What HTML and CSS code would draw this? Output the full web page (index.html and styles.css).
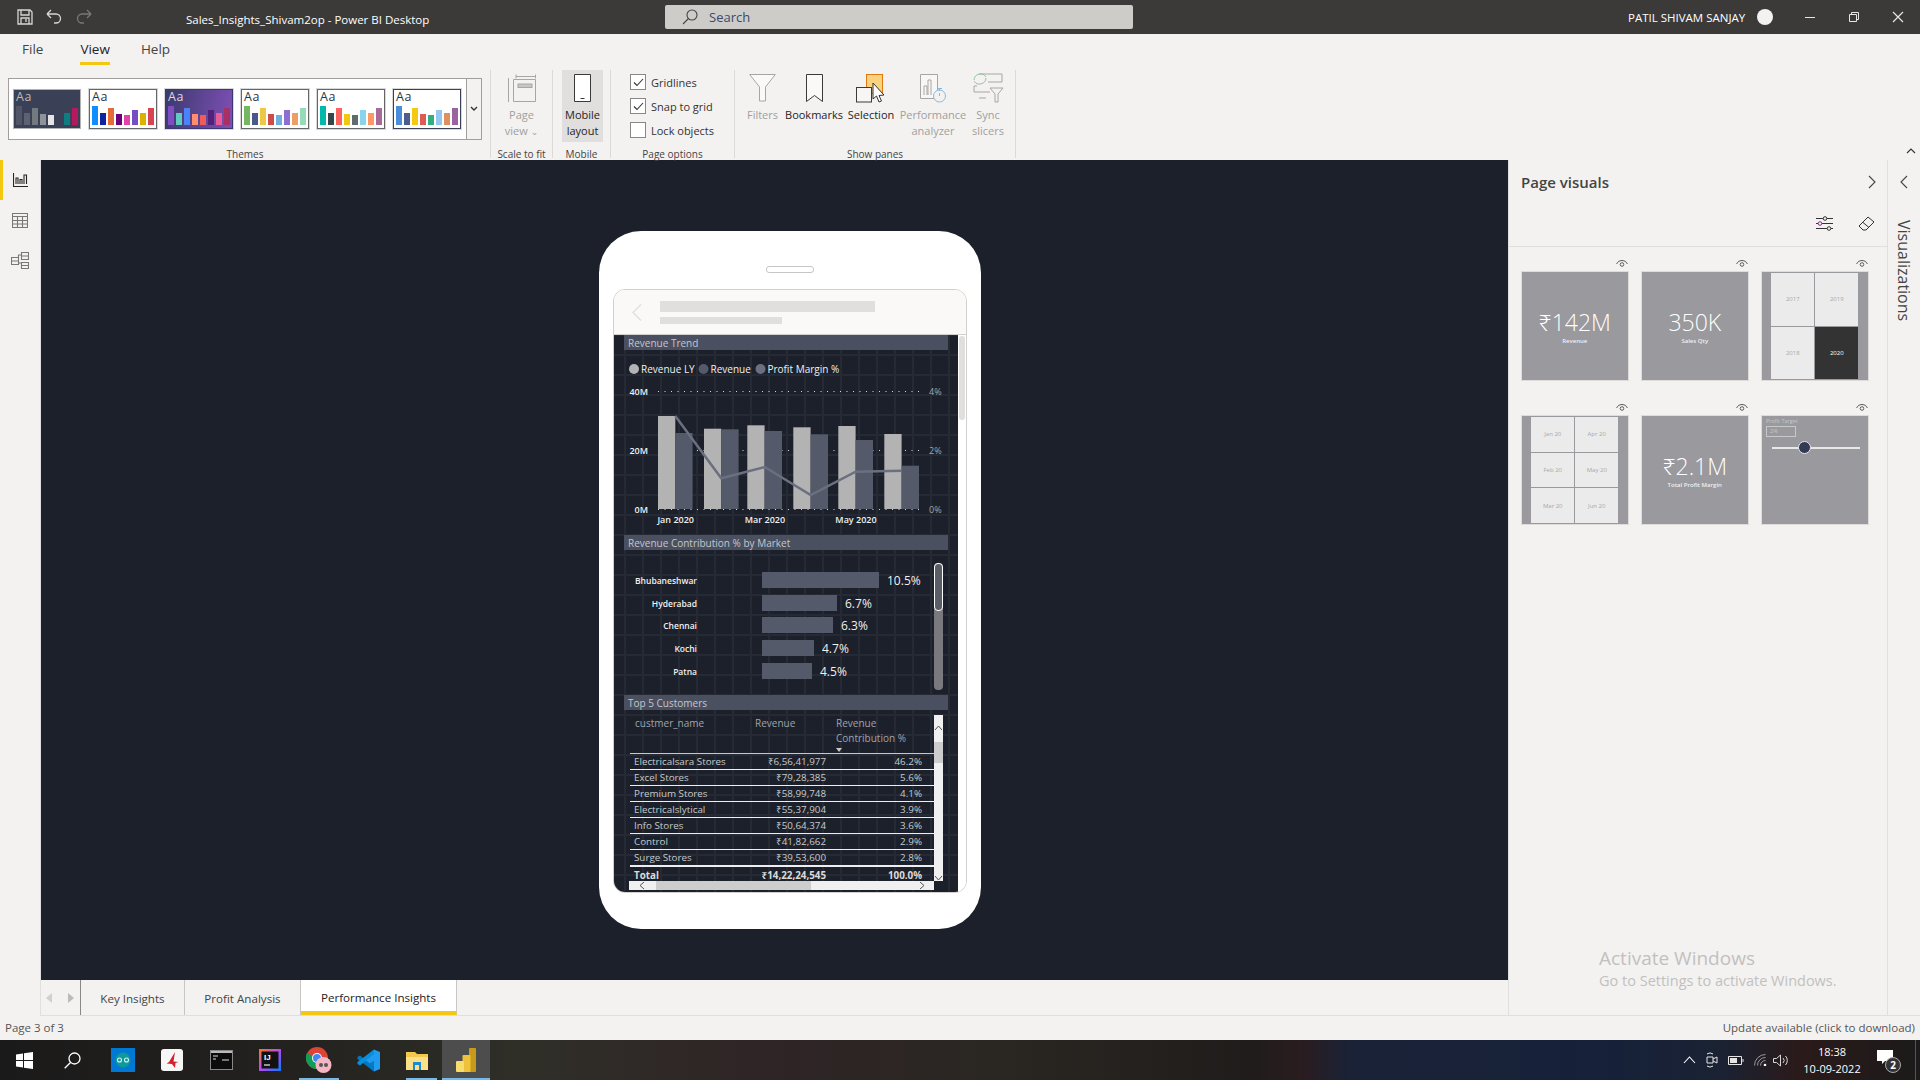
FILE: index.html
```html
<!DOCTYPE html>
<html lang="en">
<head>
    <meta charset="UTF-8">
    <title>Sales_Insights_Shivam2op - Power BI Desktop</title>
    <link rel="stylesheet" href="styles.css">
</head>
<body>
<div class="app">
    <!-- title bar -->
    <div class="titlebar">
        <div class="quick">
            <svg width="18" height="18" viewBox="0 0 18 18" fill="none" stroke="#d8d6d4" stroke-width="1.3"><path d="M2 2h12l2 2v12H2z"/><path d="M5 2v5h8V2M5 16v-6h8v6M10 11v3"/></svg>
            <svg width="16" height="18" viewBox="0 0 16 18" fill="none" stroke="#d8d6d4" stroke-width="1.3"><path d="M1 7h9a4.500 4.500 0 0 1 0 9H8M1 7l4-4M1 7l4 4" transform="translate(0 -1)"/></svg>
            <svg width="16" height="18" viewBox="0 0 16 18" fill="none" stroke="#7a7876" stroke-width="1.3"><path d="M15 7H6a4.500 4.500 0 0 0 0 9h2M15 7l-4-4M15 7l-4 4" transform="translate(0 -1)"/></svg>
        </div>
        <div class="doc-title">Sales_Insights_Shivam2op - Power BI Desktop</div>
        <div class="searchbox">
            <svg width="16" height="16" viewBox="0 0 16 16" fill="none" stroke="#444" stroke-width="1.1"><circle cx="10" cy="6" r="5"/><path d="M6.500 9.500L1 15"/></svg>
            <span>Search</span>
        </div>
        <div class="user">PATIL SHIVAM SANJAY</div>
        <div class="avatar"></div>
        <div class="winbtns">
            <svg width="12" height="12" viewBox="0 0 12 12" stroke="#e6e6e6" fill="none"><path d="M1 6.500h10"/></svg>
            <svg width="12" height="12" viewBox="0 0 12 12" stroke="#e6e6e6" fill="none"><path d="M1.500 3.500h7v7h-7zM3.500 3.500v-2h7v7h-2"/></svg>
            <svg width="12" height="12" viewBox="0 0 12 12" stroke="#e6e6e6" fill="none" stroke-width="1.2"><path d="M1 1l10 10M11 1L1 11"/></svg>
        </div>
    </div>

    <!-- menu tabs -->
    <div class="menutabs">
        <div class="menutab">File</div>
        <div class="menutab active">View</div>
        <div class="menutab">Help</div>
    </div>

    <!-- ribbon -->
    <div class="ribbon">
        <div class="group g-themes">
            <div class="group-body">
                <div class="themes">
                    <div class="theme t1"><div class="aa">Aa</div><div class="bars"><i style="height:19px;background:#505668"></i><i style="height:12px;background:#5d6270"></i><i style="height:17px;background:#74787f"></i><i style="height:11px;background:#8f9297"></i><i style="height:10px;background:#e5e5e5"></i><i style="height:0"></i><i style="height:12px;background:#0e7d81"></i><i style="height:17px;background:#b5195e"></i></div></div>
                    <div class="theme"><div class="aa">Aa</div><div class="bars"><i style="height:19px;background:#118dff"></i><i style="height:12px;background:#12239e"></i><i style="height:17px;background:#e66c37"></i><i style="height:11px;background:#6b007b"></i><i style="height:10px;background:#e044a7"></i><i style="height:15px;background:#744ec2"></i><i style="height:12px;background:#d9b300"></i><i style="height:17px;background:#d64550"></i></div></div>
                    <div class="theme t3"><div class="aa">Aa</div><div class="bars"><i style="height:19px;background:#7f4dc4"></i><i style="height:12px;background:#5ecbbe"></i><i style="height:17px;background:#4a82f7"></i><i style="height:11px;background:#ff8d6f"></i><i style="height:10px;background:#f35b57"></i><i style="height:15px;background:#52227a"></i><i style="height:12px;background:#ea5b97"></i><i style="height:17px;background:#a83065"></i></div></div>
                    <div class="theme"><div class="aa">Aa</div><div class="bars"><i style="height:19px;background:#73b761"></i><i style="height:12px;background:#4a588a"></i><i style="height:17px;background:#ecc846"></i><i style="height:11px;background:#cd4c46"></i><i style="height:10px;background:#71afe2"></i><i style="height:15px;background:#8d6fd1"></i><i style="height:12px;background:#ee9e64"></i><i style="height:17px;background:#95dabb"></i></div></div>
                    <div class="theme"><div class="aa">Aa</div><div class="bars"><i style="height:19px;background:#01b8aa"></i><i style="height:12px;background:#374649"></i><i style="height:17px;background:#fd625e"></i><i style="height:11px;background:#f2c80f"></i><i style="height:10px;background:#5f6b6d"></i><i style="height:15px;background:#8ad4eb"></i><i style="height:12px;background:#fe9666"></i><i style="height:17px;background:#a66999"></i></div></div>
                    <div class="theme t6"><div class="aa">Aa</div><div class="bars"><i style="height:19px;background:#4a8ddc"></i><i style="height:12px;background:#4c5d8a"></i><i style="height:17px;background:#f3c911"></i><i style="height:11px;background:#dc5b57"></i><i style="height:10px;background:#33ae81"></i><i style="height:15px;background:#95c8f0"></i><i style="height:12px;background:#dd915f"></i><i style="height:17px;background:#9a64a0"></i></div></div>
                </div>
                <div class="themes-more"><svg width="8" height="6" viewBox="0 0 8 6" fill="none" stroke="#333" stroke-width="1.4"><path d="M1 1l3 3 3-3"/></svg></div>
            </div>
            <div class="group-label">Themes</div>
        </div>

        <div class="group g-scale">
            <div class="group-body">
                <div class="rbtn dim">
                    <svg width="28" height="28" viewBox="0 0 28 28" fill="none" stroke="#a8a6a4"><path d="M.5 4v24"/><path d="M5.500 5.500h22v22h-22z"/><path d="M8 .5v4M27.500 .5v4M8 2.500h19"/><rect x="10" y="10" width="14" height="3.500" fill="#c8c6c4"/></svg>
                    <span>Page<br>view <small>⌄</small></span>
                </div>
            </div>
            <div class="group-label">Scale to fit</div>
        </div>

        <div class="group g-mobile">
            <div class="group-body">
                <div class="rbtn selected">
                    <svg width="17" height="28" viewBox="0 0 17 28" fill="#fff" stroke="#3b3a39"><path d="M.5.500h16v27H.5z"/><path d="M6.500 24.500h4"/></svg>
                    <span>Mobile<br>layout</span>
                </div>
            </div>
            <div class="group-label">Mobile</div>
        </div>

        <div class="group g-options">
            <div class="group-body checks">
                <label class="check"><span class="box"><svg width="11" height="9" viewBox="0 0 11 9" fill="none" stroke="#333" stroke-width="1.1"><path d="M1 4.500l3 3 6-6.500"/></svg></span>Gridlines</label>
                <label class="check"><span class="box"><svg width="11" height="9" viewBox="0 0 11 9" fill="none" stroke="#333" stroke-width="1.1"><path d="M1 4.500l3 3 6-6.500"/></svg></span>Snap to grid</label>
                <label class="check"><span class="box"></span>Lock objects</label>
            </div>
            <div class="group-label">Page options</div>
        </div>

        <div class="group g-panes">
            <div class="group-body panes">
                <div class="rbtn dim w-filters">
                    <svg width="27" height="28" viewBox="0 0 27 28" fill="#faf9f8" stroke="#a8a6a4"><path d="M.7.500h25.600L16.500 13v14h-6V13z"/></svg>
                    <span>Filters</span>
                </div>
                <div class="rbtn w-book">
                    <svg width="17" height="28" viewBox="0 0 17 28" fill="#faf9f8" stroke="#3b3a39"><path d="M.5.500h16v27l-8-6-8 6z"/></svg>
                    <span>Bookmarks</span>
                </div>
                <div class="rbtn w-sel">
                    <svg width="30" height="30" viewBox="0 0 30 30"><rect x="10.500" y=".5" width="16" height="19" fill="#f8d27f" stroke="#e07a10"/><rect x=".5" y="13.500" width="15" height="14.500" fill="#f7f6f5" stroke="#3b3a39"/><path d="M17 9v16l3.500-3 2.500 6 2.500-1-2.500-5.500 5-.5z" fill="#fff" stroke="#333"/></svg>
                    <span>Selection</span>
                </div>
                <div class="rbtn dim w-perf">
                    <svg width="27" height="30" viewBox="0 0 27 30" fill="none" stroke="#a8a6a4"><path d="M.5.500h17v24H.5z" fill="#f8f7f6"/><path d="M4 21V12h3v9M8 21V6h3v15"/><circle cx="19.500" cy="22" r="6" fill="#f3f2f1" stroke="#8ab8dc"/><path d="M17 14.500h5M19.500 15v2M19.500 22v-3" stroke="#8ab8dc"/></svg>
                    <span>Performance<br>analyzer</span>
                </div>
                <div class="rbtn dim w-sync">
                    <svg width="32" height="32" viewBox="0 0 32 32" fill="none" stroke="#a8a6a4"><path d="M7 2h23v8H16M5 14H2v6h16M7 26h7"/><path d="M18 16h13l-5 6v8h-3v-8z" fill="#f3f2f1"/><path d="M2 8a6.500 6.500 0 0 1 12-3M14 6a6.500 6.500 0 0 1-12 3" stroke="#8fc79a"/></svg>
                    <span>Sync<br>slicers</span>
                </div>
            </div>
            <div class="group-label">Show panes</div>
        </div>
        <div class="ribbon-collapse"><svg width="10" height="6" viewBox="0 0 10 6" fill="none" stroke="#333" stroke-width="1.1"><path d="M1 5l4-4 4 4"/></svg></div>
    </div>

    <div class="work">
        <!-- left rail -->
        <div class="rail">
            <div class="rail-item current"><svg width="15" height="14" viewBox="0 0 15 14" fill="none" stroke="#252423" stroke-width="1.100"><path d="M.5 0v13.500H15"/><path d="M3 11V5h2v6M7 11V6.500h2V11M11 11V2h2.500v9"/></svg></div>
            <div class="rail-item"><svg width="16" height="15" viewBox="0 0 16 15" fill="none" stroke="#7a7876" stroke-width="1.100"><path d="M.5.500h15v14H.5zM.5 3.500h15M.5 7.500h15M.5 11h15M5.500 3.500v11M10.500 3.500v11"/></svg></div>
            <div class="rail-item"><svg width="18" height="17" viewBox="0 0 18 17" fill="none" stroke="#7a7876" stroke-width="1.100"><path d="M.5 5.500h7v7h-7zM.5 9h7M10.500.5h7v7h-7zM10.500 4h7M10.500 10.500h7v6h-7zM10.500 13.500h7M7.500 6V3h3M7.500 11h3"/></svg></div>
        </div>

        <div class="center">
            <!-- report canvas with phone frame -->
            <div class="canvas">
                <div class="phone">
                    <div class="speaker"></div>
                    <div class="screen">
                        <div class="screen-head">
                            <svg width="10" height="17" viewBox="0 0 10 17" fill="none" stroke="#e1dfdd" stroke-width="1.300"><path d="M9 .5L1 8.500l8 8"/></svg>
                            <div class="skel">
                                <div class="skel-a"></div>
                                <div class="skel-b"></div>
                            </div>
                        </div>
                        <div class="screen-body">
                            <div class="mcanvas">
                                <div class="vhead">Revenue Trend</div>
                                <svg class="trend" width="345" height="185" viewBox="613 350 345 185">
                                    <circle cx="634" cy="369" r="5" fill="#b3b3b3"/>
                                    <text x="641" y="373" class="legend">Revenue LY</text>
                                    <circle cx="703.500" cy="369" r="5" fill="#555a6a"/>
                                    <text x="710.500" y="373" class="legend">Revenue</text>
                                    <circle cx="760.500" cy="369" r="5" fill="#6b7080"/>
                                    <text x="767.500" y="373" class="legend">Profit Margin %</text>

                                    <path d="M658 391.500H920M658 450.500H920M658 509.500H920" stroke="#d8d8d8" stroke-dasharray="1 5.500"/>

                                    <g fill="#b3b3b3">
                                        <rect x="658" y="416" width="17.300" height="93"/>
                                        <rect x="704" y="428.700" width="17.300" height="80.300"/>
                                        <rect x="747.300" y="425.300" width="17.300" height="83.700"/>
                                        <rect x="793.300" y="427.300" width="17.300" height="81.700"/>
                                        <rect x="838.300" y="426" width="17.300" height="83"/>
                                        <rect x="884.300" y="434" width="17.300" height="75"/>
                                    </g>
                                    <g fill="#555a6a">
                                        <rect x="675.300" y="433" width="17.300" height="76"/>
                                        <rect x="721.300" y="429.300" width="17.300" height="79.700"/>
                                        <rect x="764.700" y="431" width="17.300" height="78"/>
                                        <rect x="810.700" y="434.300" width="17.300" height="74.700"/>
                                        <rect x="855.700" y="440" width="17.300" height="69"/>
                                        <rect x="901.700" y="465.700" width="17.300" height="43.300"/>
                                    </g>
                                    <polyline points="675.300,416 721.300,478.300 764.700,467 810.700,495 855.700,471.700 901.700,470.700" fill="none" stroke="#6b7080" stroke-width="2.500"/>

                                    <text x="648" y="395" class="axis" text-anchor="end">40M</text>
                                    <text x="648" y="454" class="axis" text-anchor="end">20M</text>
                                    <text x="648" y="513" class="axis" text-anchor="end">0M</text>
                                    <text x="929" y="395" class="axis2">4%</text>
                                    <text x="929" y="454" class="axis2">2%</text>
                                    <text x="929" y="513" class="axis2">0%</text>
                                    <text x="675.700" y="522.500" class="axis" text-anchor="middle">Jan 2020</text>
                                    <text x="765" y="522.500" class="axis" text-anchor="middle">Mar 2020</text>
                                    <text x="856" y="522.500" class="axis" text-anchor="middle">May 2020</text>
                                </svg>

                                <div class="vhead">Revenue Contribution % by Market</div>
                                <div class="market">
                                    <div class="mrow"><div class="mname">Bhubaneshwar</div><div class="mbar" style="width:117px"></div><div class="mval">10.5%</div></div>
                                    <div class="mrow"><div class="mname">Hyderabad</div><div class="mbar" style="width:75px"></div><div class="mval">6.7%</div></div>
                                    <div class="mrow"><div class="mname">Chennai</div><div class="mbar" style="width:71px"></div><div class="mval">6.3%</div></div>
                                    <div class="mrow"><div class="mname">Kochi</div><div class="mbar" style="width:52px"></div><div class="mval">4.7%</div></div>
                                    <div class="mrow"><div class="mname">Patna</div><div class="mbar" style="width:50px"></div><div class="mval">4.5%</div></div>
                                    <div class="mscroll"><div class="mthumb"></div></div>
                                </div>

                                <div class="vhead">Top 5 Customers</div>
                                <div class="customers">
                                    <table class="ctable">
                                        <colgroup><col class="c1"><col class="c2"><col class="c3"></colgroup>
                                        <thead>
                                            <tr><th>custmer_name</th><th>Revenue</th><th>Revenue Contribution %<span class="sort"></span></th></tr>
                                        </thead>
                                        <tbody>
                                            <tr><td>Electricalsara Stores</td><td>₹6,56,41,977</td><td>46.2%</td></tr>
                                            <tr><td>Excel Stores</td><td>₹79,28,385</td><td>5.6%</td></tr>
                                            <tr><td>Premium Stores</td><td>₹58,99,748</td><td>4.1%</td></tr>
                                            <tr><td>Electricalslytical</td><td>₹55,37,904</td><td>3.9%</td></tr>
                                            <tr><td>Info Stores</td><td>₹50,64,374</td><td>3.6%</td></tr>
                                            <tr><td>Control</td><td>₹41,82,662</td><td>2.9%</td></tr>
                                            <tr class="last"><td>Surge Stores</td><td>₹39,53,600</td><td>2.8%</td></tr>
                                        </tbody>
                                        <tfoot>
                                            <tr><td>Total</td><td>₹14,22,24,545</td><td>100.0%</td></tr>
                                        </tfoot>
                                    </table>
                                    <div class="vscroll">
                                        <svg width="9" height="6" viewBox="0 0 9 6" fill="none" stroke="#555"><path d="M1 5l3.500-4L8 5"/></svg>
                                        <div class="vthumb"></div>
                                        <svg width="9" height="6" viewBox="0 0 9 6" fill="none" stroke="#555"><path d="M1 1l3.500 4L8 1"/></svg>
                                    </div>
                                    <div class="hscroll">
                                        <svg width="6" height="9" viewBox="0 0 6 9" fill="none" stroke="#555"><path d="M5 1L1 4.500 5 8"/></svg>
                                        <div class="hthumb"></div>
                                        <svg width="6" height="9" viewBox="0 0 6 9" fill="none" stroke="#555"><path d="M1 1l4 3.500L1 8"/></svg>
                                    </div>
                                </div>
                            </div>
                            <div class="screen-scroll"><div class="screen-thumb"></div></div>
                        </div>
                    </div>
                </div>
            </div>

            <!-- page tabs -->
            <div class="pagetabs">
                <div class="pagenav">
                    <svg width="6" height="10" viewBox="0 0 6 10" fill="#d2d0ce"><path d="M6 0v10L0 5z"/></svg>
                    <svg width="6" height="10" viewBox="0 0 6 10" fill="#bdbbb9"><path d="M0 0v10l6-5z"/></svg>
                </div>
                <div class="pagetab t-key">Key Insights</div>
                <div class="pagetab t-profit">Profit Analysis</div>
                <div class="pagetab t-perf active">Performance Insights</div>
            </div>
        </div>

        <!-- right pane -->
        <div class="pane">
            <div class="pane-main">
                <div class="pane-head">
                    <div class="pane-title-row">
                        <div class="pane-title">Page visuals</div>
                        <svg width="8" height="14" viewBox="0 0 8 14" fill="none" stroke="#444" stroke-width="1.100"><path d="M1 1l6 6-6 6"/></svg>
                    </div>
                    <div class="pane-tools">
                        <svg width="17" height="15" viewBox="0 0 17 15" fill="none" stroke="#333"><path d="M0 2.500h17M0 7.500h17M0 12.500h17"/><circle cx="9" cy="2.500" r="1.800" fill="#f3f2f1"/><circle cx="4" cy="7.500" r="1.800" fill="#f3f2f1" stroke="#8a2a9a"/><circle cx="13" cy="12.500" r="1.800" fill="#f3f2f1"/></svg>
                        <svg width="17" height="15" viewBox="0 0 17 15" fill="none" stroke="#333"><path d="M1 10l9-9 6 5-8 8H5z"/><path d="M5 6.500l6 5"/></svg>
                    </div>
                </div>
                <div class="thumbs">
                    <div class="thumb-item">
                        <div class="eye"><svg width="12" height="8" viewBox="0 0 12 8" fill="none" stroke="#605e5c"><path d="M.5 5a6 6 0 0 1 11 0"/><circle cx="6" cy="5.500" r="1.800"/></svg></div>
                        <div class="vis card"><div class="big">₹142M</div><div class="small">Revenue</div></div>
                    </div>
                    <div class="thumb-item">
                        <div class="eye"><svg width="12" height="8" viewBox="0 0 12 8" fill="none" stroke="#605e5c"><path d="M.5 5a6 6 0 0 1 11 0"/><circle cx="6" cy="5.500" r="1.800"/></svg></div>
                        <div class="vis card"><div class="big">350K</div><div class="small">Sales Qty</div></div>
                    </div>
                    <div class="thumb-item">
                        <div class="eye"><svg width="12" height="8" viewBox="0 0 12 8" fill="none" stroke="#605e5c"><path d="M.5 5a6 6 0 0 1 11 0"/><circle cx="6" cy="5.500" r="1.800"/></svg></div>
                        <div class="vis slicer s-two">
                            <div>2017</div><div>2019</div><div>2018</div><div class="on">2020</div>
                        </div>
                    </div>
                    <div class="thumb-item">
                        <div class="eye"><svg width="12" height="8" viewBox="0 0 12 8" fill="none" stroke="#605e5c"><path d="M.5 5a6 6 0 0 1 11 0"/><circle cx="6" cy="5.500" r="1.800"/></svg></div>
                        <div class="vis slicer s-three">
                            <div>Jan 20</div><div>Apr 20</div><div>Feb 20</div><div>May 20</div><div>Mar 20</div><div>Jun 20</div>
                        </div>
                    </div>
                    <div class="thumb-item">
                        <div class="eye"><svg width="12" height="8" viewBox="0 0 12 8" fill="none" stroke="#605e5c"><path d="M.5 5a6 6 0 0 1 11 0"/><circle cx="6" cy="5.500" r="1.800"/></svg></div>
                        <div class="vis card"><div class="big">₹2.1M</div><div class="small">Total Profit Margin</div></div>
                    </div>
                    <div class="thumb-item">
                        <div class="eye"><svg width="12" height="8" viewBox="0 0 12 8" fill="none" stroke="#605e5c"><path d="M.5 5a6 6 0 0 1 11 0"/><circle cx="6" cy="5.500" r="1.800"/></svg></div>
                        <div class="vis target">
                            <div class="target-title">Profit Target</div>
                            <div class="target-input">2%</div>
                            <div class="target-track"><div class="target-knob"></div></div>
                        </div>
                    </div>
                </div>
                <div class="activate">
                    <div class="act-a">Activate Windows</div>
                    <div class="act-b">Go to Settings to activate Windows.</div>
                </div>
            </div>
            <div class="pane-strip">
                <svg width="8" height="14" viewBox="0 0 8 14" fill="none" stroke="#444" stroke-width="1.100"><path d="M7 1L1 7l6 6"/></svg>
                <div class="strip-label">Visualizations</div>
            </div>
        </div>
    </div>

    <div class="statusbar">
        <div>Page 3 of 3</div>
        <div>Update available (click to download)</div>
    </div>

    <!-- windows taskbar -->
    <div class="taskbar">
        <div class="task t-win"><svg width="17" height="17" viewBox="0 0 17 17" fill="#fff"><path d="M0 2.500l7-1v6.500H0zM8 1.300L17 0v8H8zM0 9h7v6.500l-7-1zM8 9h9v8l-9-1.300z"/></svg></div>
        <div class="task t-find"><svg width="17" height="17" viewBox="0 0 17 17" fill="none" stroke="#fff" stroke-width="1.300"><circle cx="10.500" cy="6.500" r="5.500"/><path d="M6.500 10.500L.7 16.300"/></svg></div>
        <div class="task"><svg width="24" height="24" viewBox="0 0 24 24"><rect width="24" height="24" fill="#0078d4"/><circle cx="12" cy="12" r="7.500" fill="#0e9a9c"/><path d="M6.500 12a2 2 0 0 1 4 0 2 2 0 0 1-4 0M13.500 12a2 2 0 0 1 4 0 2 2 0 0 1-4 0" fill="none" stroke="#d8f2f0" stroke-width="1.100"/></svg></div>
        <div class="task"><svg width="22" height="22" viewBox="0 0 22 22"><rect width="22" height="22" rx="3" fill="#f6f6f6"/><path d="M14 3L8 13l-2.500 1.500L11 15l3 4 .5-5 3-1-5-.5z" fill="#d4202a"/></svg></div>
        <div class="task"><svg width="23" height="20" viewBox="0 0 23 20"><rect x=".5" y=".5" width="22" height="19" fill="#0c0c0c" stroke="#888"/><path d="M1 1h21v2H1z" fill="#bbb"/><path d="M3 6h5M3 9h3M12 10h7" stroke="#ddd"/></svg></div>
        <div class="task"><svg width="22" height="22" viewBox="0 0 22 22"><defs><linearGradient id="ij" x1="0" y1="0" x2="1" y2="1"><stop offset="0" stop-color="#f97a12"/><stop offset=".5" stop-color="#b74af7"/><stop offset="1" stop-color="#087cfa"/></linearGradient></defs><rect width="22" height="22" fill="url(#ij)"/><rect x="2.500" y="2.500" width="17" height="17" fill="#111"/><text x="5" y="11" class="ij">IJ</text><path d="M5 16h6" stroke="#ddd" stroke-width="1.300"/></svg></div>
        <div class="task t-chrome"><svg width="28" height="28" viewBox="0 0 28 28"><circle cx="12" cy="12" r="11" fill="#db4437"/><path d="M12 12L2.500 17.500A11 11 0 0 0 12 23z" fill="#0f9d58"/><path d="M2.500 17.500A11 11 0 0 1 2 7l10 5z" fill="#0f9d58"/><path d="M12 12h11a11 11 0 0 1-11 11z" fill="#f4b400"/><circle cx="12" cy="12" r="5" fill="#fff"/><circle cx="12" cy="12" r="4" fill="#4285f4"/><circle cx="18.500" cy="19" r="8" fill="#f4b6c2"/><circle cx="16" cy="19" r="2" fill="#555"/><circle cx="21" cy="19" r="2" fill="#555"/></svg></div>
        <div class="task"><svg width="23" height="23" viewBox="0 0 23 23"><path d="M17 .5L23 3v17l-6 2.500L6.500 12.500z" fill="#1f9cf0"/><path d="M17 .5v22L10 16l7-4.500V7z" fill="#0065a9" opacity=".6"/><path d="M.5 8L3 6.500l14 11.500v4.500L.5 10z" fill="#0078c4"/><path d="M.5 15L3 16.500 17 5V.5L.5 13z" fill="#0a8fdc"/></svg></div>
        <div class="task t-files"><svg width="22" height="19" viewBox="0 0 22 19"><path d="M0 1h9l2 2h11v16H0z" fill="#f2c94c"/><path d="M0 6h22v13H0z" fill="#fbe08a"/><path d="M7 11h8v8h-2v-5H9v5H7z" fill="#1b8ad6"/></svg></div>
        <div class="task t-pbi"><svg width="20" height="24" viewBox="0 0 20 24"><rect x="13" width="7" height="24" rx="1" fill="#c99a1a"/><rect x="6.500" y="7" width="8" height="17" rx="1" fill="#eec23a"/><rect y="13" width="8" height="11" rx="1" fill="#f8dc6e"/></svg></div>
        <div class="tray">
            <svg width="13" height="8" viewBox="0 0 13 8" fill="none" stroke="#fff" stroke-width="1.100"><path d="M1 7l5.500-6L12 7"/></svg>
            <svg width="12" height="16" viewBox="0 0 12 16" fill="none" stroke="#e6e6e6"><path d="M1 5h6v6H1zM7 7l4-2v6l-4-2M1 2a5 5 0 0 1 6 0M1 14a5 5 0 0 0 6 0"/></svg>
            <svg width="16" height="9" viewBox="0 0 16 9" fill="none" stroke="#e6e6e6"><path d="M.5.500h13v8H.5z"/><path d="M2 2h7v5H2z" fill="#e6e6e6" stroke="none"/><path d="M15 3v3"/></svg>
            <svg width="13" height="12" viewBox="0 0 13 12" fill="none" stroke="#999"><path d="M.5 11.500a11 11 0 0 1 11-11M3.500 11.500a8 8 0 0 1 8-8M6.500 11.500a5 5 0 0 1 5-5"/><circle cx="11" cy="11" r="1.300" fill="#fff" stroke="none"/></svg>
            <svg class="vol" width="16" height="13" viewBox="0 0 16 13" fill="none" stroke="#d8d8d8"><path d="M.5 4.500h3l4-3.500v11l-4-3.500h-3zM10 4a3.500 3.500 0 0 1 0 5M12.500 2a6.500 6.500 0 0 1 0 9"/></svg>
            <div class="clock"><div>18:38</div><div>10-09-2022</div></div>
            <div class="notif">
                <svg width="16" height="15" viewBox="0 0 16 15" fill="#fff"><path d="M0 0h16v11H8l-3 3v-3H0z"/></svg>
                <span class="notif-count">2</span>
            </div>
        </div>
    </div>
</div>
</body>
</html>
```

FILE: styles.css
```css
* {
    box-sizing: border-box;
}
body {
    margin: 0;
    font-family: "Open Sans", "Noto Sans", "DejaVu Sans", sans-serif;
    color: #252423;
    background: #f3f2f1;
    overflow: hidden;
}
.app {
    width: 1920px;
    height: 1080px;
    display: flex;
    flex-direction: column;
}

/* title bar */
.titlebar {
    height: 34px;
    background: #3b3a39;
    display: flex;
    align-items: center;
    color: #fff;
    font-size: 11.5px;
}
.quick {
    width: 186px;
    padding-left: 16px;
    display: flex;
    gap: 14px;
    align-items: center;
}
.quick svg:nth-child(2) {
    margin-left: -2px;
}
.doc-title {
    width: 479px;
    padding-top: 5px;
}
.searchbox {
    width: 468px;
    height: 24px;
    background: #cdccc9;
    border-radius: 2px;
    display: flex;
    align-items: center;
    gap: 11px;
    padding-left: 17px;
    color: #3a4a68;
    font-size: 13px;
}
.user {
    margin-left: 495px;
    width: 127px;
    white-space: nowrap;
}
.avatar {
    width: 16px;
    height: 16px;
    border-radius: 50%;
    background: #f3f2f1;
    margin-left: 2px;
}
.winbtns {
    margin-left: 31px;
    display: flex;
    gap: 32px;
}

/* menu tabs */
.menutabs {
    height: 36px;
    background: #f3f2f1;
    display: flex;
    font-size: 13.5px;
    padding-left: 22px;
    gap: 31px;
}
.menutab {
    padding-top: 6px;
    height: 31px;
    color: #444;
}
.menutab.active {
    color: #252423;
    margin-left: 6px;
    border-bottom: 3px solid #f2c811;
}

/* ribbon */
.ribbon {
    height: 90px;
    background: #f3f2f1;
    display: flex;
    position: relative;
}
.group {
    display: flex;
    flex-direction: column;
    border-right: 1px solid #dcdad8;
    margin-bottom: 2px;
}
.group-body {
    flex: none;
    height: 72px;
    margin-bottom: 4px;
    display: flex;
}
.group-label {
    flex: none;
    font-size: 10px;
    text-align: center;
    color: #444;
    line-height: 16px;
}
.g-themes {
    width: 491px;
    padding-left: 8px;
}
.g-themes .group-body {
    height: 62px;
    margin: 8px 0 6px;
    width: 474px;
}
.g-themes .group-label {
    padding-right: 8px;
}
.g-scale {
    width: 62px;
}
.g-mobile {
    width: 58px;
}
.g-options {
    width: 124px;
}
.g-panes {
    width: 281px;
}
.themes {
    width: 458px;
    border: 1px solid #a19f9d;
    border-right: 0;
    background: #fff;
    display: flex;
    gap: 8px;
    padding: 10px 0 0 4px;
}
.themes-more {
    width: 16px;
    border: 1px solid #a19f9d;
    display: flex;
    align-items: center;
    justify-content: center;
}
.theme {
    width: 68px;
    height: 40px;
    border: 1px solid #666;
    outline: 1px solid #d8d8d8;
    background: #fff;
    position: relative;
    color: #333;
}
.theme.t1 {
    background: #3a4055;
    border-color: #b3b3b3;
    outline: 0;
    color: #bbb;
}
.theme.t3 {
    background: linear-gradient(100deg, #3b3a6e, #7e4fb5);
    border-color: #3b3a6e;
    color: #ddd;
}
.theme.t6 {
    border-color: #3a4055;
}
.aa {
    font-size: 12.5px;
    line-height: 14px;
    padding-left: 2px;
    letter-spacing: .5px;
}
.bars {
    position: absolute;
    left: 2px;
    bottom: 3px;
    display: flex;
    gap: 2px;
    align-items: flex-end;
}
.bars i {
    display: block;
    width: 6px;
}
.rbtn {
    display: flex;
    flex-direction: column;
    align-items: center;
    font-size: 11px;
    line-height: 16px;
    text-align: center;
    padding-top: 4px;
    color: #252423;
    white-space: nowrap;
}
.rbtn svg {
    display: block;
    margin-bottom: 5px;
    flex: none;
}
.rbtn.dim {
    color: #a19f9d;
}
.rbtn small {
    font-size: 9px;
}
.g-scale .rbtn {
    width: 62px;
}
.g-mobile .group-body {
    padding-left: 9px;
}
.rbtn.selected {
    width: 41px;
    background: #e1dfdd;
}
.checks {
    flex-direction: column;
    padding: 4px 0 0 19px;
    gap: 8px;
}
.check {
    display: flex;
    align-items: center;
    gap: 5px;
    font-size: 11px;
    height: 16px;
    color: #333;
}
.box {
    width: 16px;
    height: 16px;
    border: 1px solid #8a8886;
    background: #fff;
    display: flex;
    align-items: center;
    justify-content: center;
}
.w-filters {
    width: 53px;
    margin-left: 1px;
}
.w-book {
    width: 50px;
}
.w-sel {
    width: 64px;
}
.w-perf {
    width: 60px;
}
.w-sync {
    width: 50px;
}
.w-sel svg,
.w-perf svg {
    margin-bottom: 3px;
}
.w-sync svg {
    margin-top: -2px;
    margin-bottom: 3px;
}
.ribbon-collapse {
    position: absolute;
    right: 4px;
    top: 78px;
    line-height: 0;
}

/* main area */
.work {
    height: 856px;
    display: flex;
}
.rail {
    width: 41px;
    background: #f3f2f1;
    border-right: 1px solid #e1dfdd;
}
.rail-item {
    height: 40px;
    display: flex;
    align-items: center;
    justify-content: center;
}
.rail-item.current {
    border-left: 3px solid #f2c811;
    padding-right: 3px;
}
.center {
    width: 1467px;
    display: flex;
    flex-direction: column;
}
.canvas {
    height: 820px;
    background: #1b202a;
    padding: 71px 0 0 558px;
}
.phone {
    width: 382px;
    height: 698px;
    background: #fff;
    border-radius: 42px;
    padding: 35px 14px 0;
}
.speaker {
    width: 48px;
    height: 7px;
    margin: 0 auto 16px;
    border: 1px solid #c8c6c4;
    border-radius: 3px;
}
.screen {
    width: 354px;
    height: 604px;
    border: 1px solid #d2d0ce;
    border-radius: 12px;
    overflow: hidden;
    display: flex;
    flex-direction: column;
}
.screen-head {
    height: 45px;
    flex: none;
    background: #faf9f8;
    border-bottom: 1px solid #d2d0ce;
    display: flex;
    padding: 14px 0 0 18px;
    gap: 18px;
}
.skel-a {
    width: 215px;
    height: 11px;
    background: #e1dfdd;
    margin: -3px 0 5px;
}
.skel-b {
    width: 122px;
    height: 7px;
    background: #e1dfdd;
}
.screen-body {
    display: flex;
    flex: 1;
    min-height: 0;
}
.mcanvas {
    width: 344px;
    background-color: #1b202a;
    background-image:
        linear-gradient(to right, #252a34 2px, transparent 2px),
        linear-gradient(to bottom, #252a34 2px, transparent 2px);
    background-size: 18px 20px;
    background-position: 10px -1px;
}
.vhead {
    margin-left: 10px;
    width: 324px;
    height: 15px;
    background: #4a5060;
    color: #c4c6cc;
    font-size: 10px;
    line-height: 16px;
    padding-left: 4px;
    white-space: nowrap;
}
.trend {
    display: block;
    width: 345px;
    height: 185px;
    margin-left: -1px;
}
.legend {
    font-family: "Open Sans", "Noto Sans", sans-serif;
    font-size: 10px;
    fill: #f0f0f0;
}
.axis {
    font-family: "Open Sans", "Noto Sans", sans-serif;
    font-size: 9px;
    font-weight: 600;
    fill: #f0f0f0;
}
.axis2 {
    font-family: "Open Sans", "Noto Sans", sans-serif;
    font-size: 9px;
    fill: #a6a6a6;
}
.market {
    height: 145px;
    padding-top: 22px;
    display: flex;
    flex-direction: column;
    gap: 6.67px;
    position: relative;
}
.mrow {
    height: 16px;
    display: flex;
    align-items: center;
}
.mname {
    width: 83px;
    margin-right: 65px;
    padding-top: 1px;
    text-align: right;
    font-size: 8.5px;
    font-weight: 600;
    color: #f0f0f0;
}
.mbar {
    height: 16px;
    background: #555a6a;
}
.mval {
    margin-left: 8px;
    padding-top: 1px;
    font-size: 12px;
    color: #f0f0f0;
}
.mscroll {
    position: absolute;
    left: 320px;
    top: 13px;
    width: 9px;
    height: 127px;
    background: #7a7a7e;
    border-radius: 4px;
}
.mthumb {
    height: 48px;
    background: #5a5e66;
    border: 1px solid #fff;
    border-radius: 4px;
}
.customers {
    position: relative;
    height: 180px;
    padding: 5px 0 0 16px;
}
.ctable {
    width: 304px;
    table-layout: fixed;
    border-collapse: collapse;
    font-size: 9.8px;
    color: #c8cacc;
}
.c1 {
    width: 120px;
}
.c2 {
    width: 81px;
}
.ctable th {
    font-weight: 400;
    font-size: 10px;
    text-align: left;
    vertical-align: top;
    height: 38px;
    padding: 1px 5px 0;
    line-height: 15px;
    color: #a0a4ac;
    border-bottom: 1px solid #c8c8c8;
    position: relative;
}
.ctable th:last-child {
    padding-right: 20px;
}
.sort {
    position: absolute;
    left: 5px;
    bottom: 1px;
    border: 3.500px solid transparent;
    border-top: 4px solid #c8c8c8;
    border-bottom: 0;
}
.ctable td {
    height: 16px;
    padding: 1px 5px 0 4px;
    line-height: 14px;
    white-space: nowrap;
    border-bottom: 1px solid #eee;
}
.ctable td + td {
    text-align: right;
}
.ctable td:last-child {
    padding-right: 12px;
}
.ctable tbody .last td {
    border-bottom: 2px solid #eee;
}
.ctable tfoot td {
    font-weight: 700;
    color: #dcdcdc;
    border-bottom: 0;
    height: 15px;
    line-height: 16px;
}
.vscroll {
    position: absolute;
    left: 320px;
    top: 5px;
    width: 9px;
    height: 166px;
    background: #f0f0f0;
    display: flex;
    flex-direction: column;
    align-items: center;
    padding-top: 10px;
}
.vthumb {
    width: 9px;
    height: 21px;
    background: #cdcdcd;
    margin: 11px 0 112px;
}
.hscroll {
    position: absolute;
    left: 15px;
    top: 171px;
    width: 305px;
    height: 9px;
    background: #f0f0f0;
    display: flex;
    align-items: center;
    padding-left: 10px;
}
.hthumb {
    width: 155px;
    height: 9px;
    background: #cdcdcd;
    margin: 0 108px 0 11px;
}
.screen-scroll {
    width: 8px;
    background: #fff;
    padding: 1px 1px 0;
}
.screen-thumb {
    height: 84px;
    background: #e1dfdd;
    border-radius: 3px;
}

/* page tabs */
.pagetabs {
    height: 36px;
    background: #f3f2f1;
    display: flex;
    border-bottom: 1px solid #e1dfdd;
    font-size: 11.6px;
}
.pagenav {
    width: 40px;
    display: flex;
    align-items: center;
    gap: 16px;
    padding-left: 5px;
    border-right: 1px solid #8a8886;
}
.pagetab {
    display: flex;
    align-items: center;
    justify-content: center;
    border-right: 1px solid #c8c6c4;
    color: #444;
    padding-top: 1px;
}
.t-key {
    width: 104px;
}
.t-profit {
    width: 116px;
}
.t-perf {
    width: 156px;
}
.pagetab.active {
    background: #fff;
    color: #252423;
    border-bottom: 4px solid #f2c811;
    padding-top: 3px;
}

/* right pane */
.pane {
    width: 412px;
    background: #f3f2f1;
    display: flex;
    border-bottom: 1px solid #e1dfdd;
}
.pane-main {
    width: 380px;
    border-left: 1px solid #e1dfdd;
    border-right: 1px solid #e1dfdd;
    position: relative;
}
.pane-head {
    height: 87px;
    border-bottom: 1px solid #e1dfdd;
    padding: 10px 11px 0 12px;
}
.pane-title-row {
    display: flex;
    justify-content: space-between;
    align-items: center;
    height: 24px;
}
.pane-title {
    font-size: 15px;
    font-weight: 600;
    color: #444;
}
.pane-tools {
    display: flex;
    justify-content: flex-end;
    gap: 25px;
    margin-top: 22px;
    padding-right: 1px;
}
.thumbs {
    display: grid;
    grid-template-columns: repeat(3, 107.500px);
    column-gap: 12.500px;
    row-gap: 15px;
    padding: 5px 0 0 12px;
}
.eye {
    height: 19px;
    text-align: right;
    padding: 7px 1px 0 0;
    line-height: 0;
}
.vis {
    width: 100%;
    height: 110px;
    background: #9a999d;
    border: 1px solid #dedcda;
}
.card {
    display: flex;
    flex-direction: column;
    align-items: center;
    justify-content: center;
    color: #fff;
}
.big {
    font-size: 23px;
    font-weight: 300;
    line-height: 30px;
}
.small {
    font-size: 6px;
    font-weight: 600;
    line-height: 8px;
    color: #f0eef2;
}
.slicer {
    display: grid;
    grid-template-columns: 43px 43px;
    gap: 1px;
    padding: 1px 10px;
    justify-content: center;
}
.slicer div {
    background: #ebebeb;
    color: #a8a8a8;
    font-size: 6px;
    display: flex;
    align-items: center;
    justify-content: center;
}
.slicer .on {
    background: #333;
    color: #fff;
}
.s-two {
    grid-template-rows: 1fr 1fr;
}
.s-three {
    grid-template-rows: 1fr 1fr 1fr;
}
.target {
    padding: 1px 4px;
    font-size: 5.500px;
    color: #c8c8c8;
}
.target-input {
    width: 30px;
    height: 11px;
    border: 1px solid #c8c8c8;
    margin-top: 1px;
    padding-left: 3px;
    line-height: 9px;
}
.target-track {
    position: relative;
    height: 2px;
    width: 88px;
    margin: 10px 0 0 6px;
    background: #e8e8e8;
}
.target-knob {
    position: absolute;
    left: 26px;
    top: -6px;
    width: 13px;
    height: 13px;
    border-radius: 50%;
    background: #333a55;
    border: 1px solid #e8e8e8;
}
.activate {
    position: absolute;
    left: 90px;
    top: 785px;
    color: #c2c0be;
    white-space: nowrap;
}
.act-a {
    font-size: 19px;
    line-height: 26px;
}
.act-b {
    font-size: 14.500px;
    line-height: 20px;
}
.pane-strip {
    width: 32px;
    display: flex;
    flex-direction: column;
    align-items: center;
    padding-top: 15px;
}
.strip-label {
    writing-mode: vertical-rl;
    font-size: 16px;
    margin-top: 31px;
    color: #444;
    line-height: 20px;
}

/* status bar */
.statusbar {
    height: 24px;
    flex: none;
    background: #f3f2f1;
    display: flex;
    justify-content: space-between;
    align-items: center;
    font-size: 11.500px;
    padding: 0 5px 2px;
    color: #555;
}

/* taskbar */
.taskbar {
    height: 40px;
    flex: none;
    display: flex;
    background: linear-gradient(to right, #1b1a1a 0, #23221f 300px, #2f2f28 520px, #2f2426 760px, #2a2722 1000px, #1f1c1b 1250px, #2a1c1f 1300px, #1a2236 1350px, #16213a 1600px, #1a2233 1720px, #2b1a1a 1800px, #1c1a1a 1920px);
}
.task {
    width: 49px;
    height: 40px;
    display: flex;
    align-items: center;
    justify-content: center;
    flex: none;
}
.t-win {
    width: 48px;
}
.t-find {
    width: 48px;
    margin-right: 2.500px;
}
.t-chrome {
    background: linear-gradient(#76b9ed, #76b9ed) center bottom / 40px 2px no-repeat;
}
.t-files {
    background: linear-gradient(#76b9ed, #76b9ed) 13px bottom / 31px 2px no-repeat;
}
.t-pbi {
    width: 48px;
    background: #4d4d4d;
    box-shadow: inset 0 -2px 0 #76b9ed;
}
.ij {
    font-family: "Liberation Sans", sans-serif;
    font-size: 8px;
    font-weight: 700;
    fill: #fff;
}
.tray {
    margin: 0 4px 0 auto;
    display: flex;
    align-items: center;
    gap: 10px;
    padding-right: 10px;
    border-right: 1px solid #555;
    color: #fff;
}
.tray .vol {
    margin-left: -4px;
}
.clock {
    width: 70px;
    text-align: center;
    font-size: 11px;
    line-height: 17px;
    margin: 0 0 0 -2px;
}
.notif {
    position: relative;
    width: 28px;
    height: 24px;
}
.notif-count {
    position: absolute;
    left: 8px;
    top: 9px;
    width: 16px;
    height: 16px;
    border: 1px solid #aaa;
    border-radius: 50%;
    background: #333;
    font-size: 10px;
    font-weight: 700;
    line-height: 14px;
    text-align: center;
}
```
